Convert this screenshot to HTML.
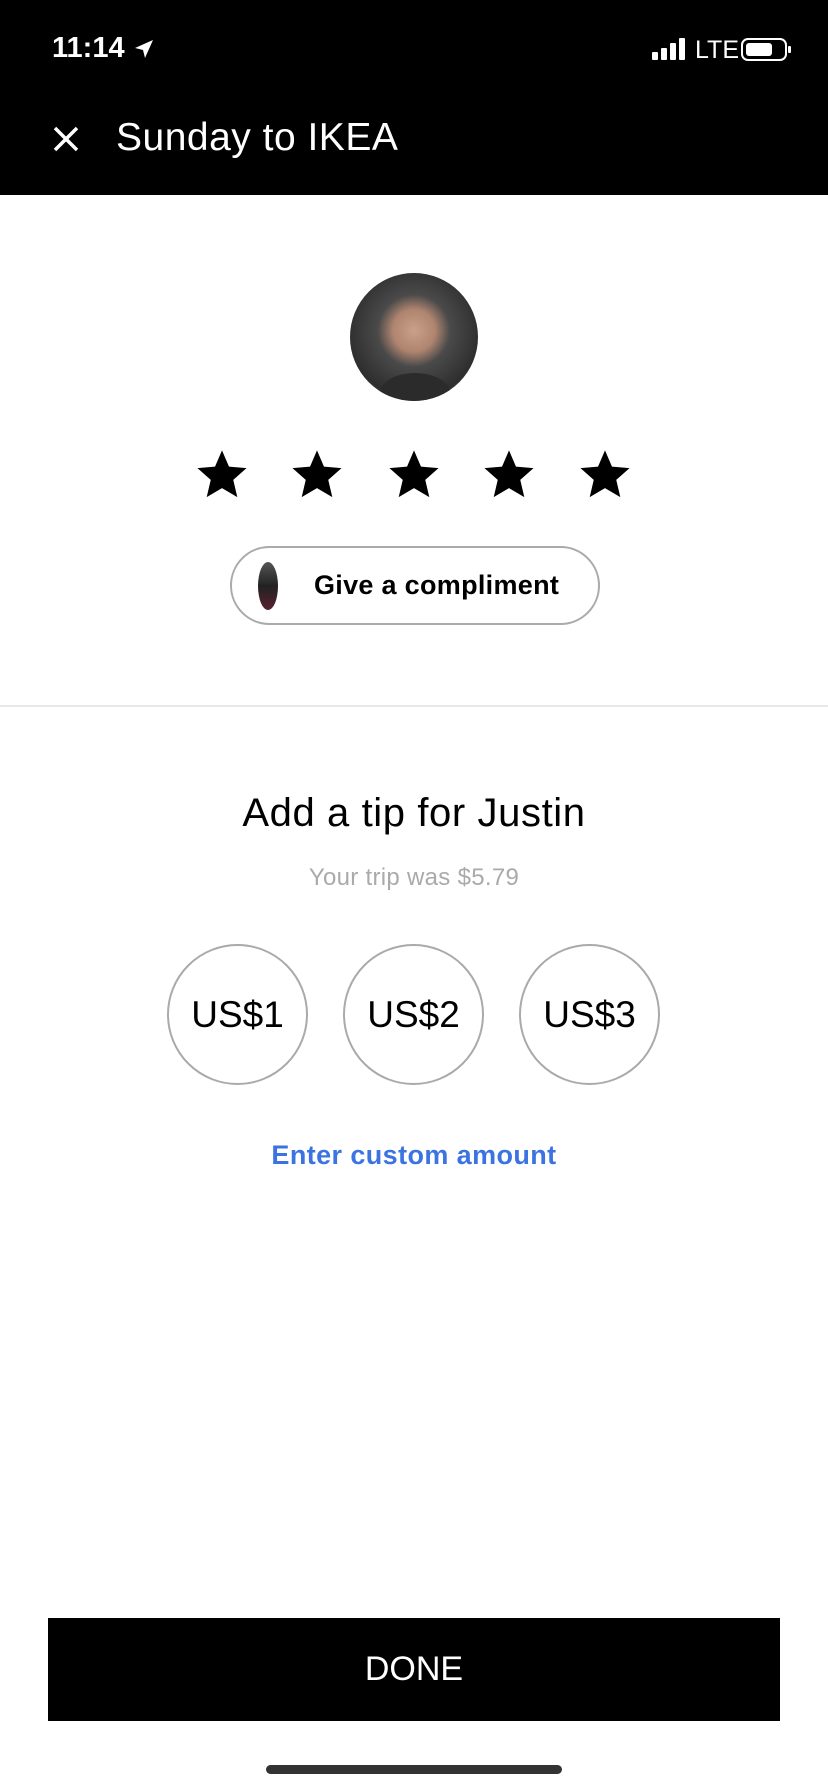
<!DOCTYPE html>
<html><head><meta charset="utf-8"><style>
*{margin:0;padding:0;box-sizing:border-box}
body{width:828px;height:1792px;background:#fff;position:relative;overflow:hidden;font-family:"Liberation Sans",sans-serif;color:#000}
.abs{position:absolute}
.hdr{left:0;top:0;width:828px;height:195px;background:#000;color:#fff}
.c{text-align:center;left:0;width:828px}
.star{position:absolute;top:447px;width:54px;height:54px}
.circ{position:absolute;top:944px;width:141px;height:141px;border:2px solid #aaa;border-radius:50%;display:flex;align-items:center;justify-content:center;font-size:37px}
</style></head><body>
<div class="abs hdr">
  <div class="abs" style="left:52px;top:32px;font-size:29px;font-weight:bold">11:14</div>
  <svg class="abs" style="left:133px;top:38px" width="22" height="22" viewBox="0 0 22 22"><path d="M20 2 L2 10 L10 12 L12 20 Z" fill="#fff"/></svg>
  <svg class="abs" style="left:652px;top:38px" width="36" height="24"><rect x="0" y="14" width="6" height="8" rx="1" fill="#fff"/><rect x="9" y="10" width="6" height="12" rx="1" fill="#fff"/><rect x="18" y="5" width="6" height="17" rx="1" fill="#fff"/><rect x="27" y="0" width="6" height="22" rx="1" fill="#fff"/></svg>
  <div class="abs" style="left:695px;top:36px;font-size:25px">LTE</div>
  <svg class="abs" style="left:741px;top:38px" width="52" height="24"><rect x="1" y="1" width="44" height="21" rx="6" fill="none" stroke="#fff" stroke-width="2"/><rect x="5" y="5" width="26" height="13" rx="3" fill="#fff"/><rect x="47" y="8" width="3" height="7" rx="1" fill="#fff"/></svg>
  <svg class="abs" style="left:52px;top:125px" width="28" height="28"><path d="M3 3L25 25M25 3L3 25" stroke="#fff" stroke-width="3.5"/></svg>
  <div class="abs" style="left:116px;top:116px;font-size:39px;letter-spacing:0.5px">Sunday to IKEA</div>
</div>
<div class="abs" style="left:350px;top:273px;width:128px;height:128px;border-radius:50%;overflow:hidden;background:radial-gradient(circle at 50% 45%,#c9a08a 0,#b08570 22%,#4a4a4a 38%,#2e2e2e 70%,#6b7a80 100%)">
  <div class="abs" style="left:30px;top:100px;width:70px;height:40px;border-radius:50%;background:#2b2b2b"></div>
</div>
<svg class="star" style="left:195px" viewBox="0 0 24 24"><path d="M12 1.5l3.1 7.2 7.8.7-5.9 5.2 1.8 7.7L12 18.3 5.2 22.3 7 14.6 1.1 9.4l7.8-.7z"/></svg>
<svg class="star" style="left:290px" viewBox="0 0 24 24"><path d="M12 1.5l3.1 7.2 7.8.7-5.9 5.2 1.8 7.7L12 18.3 5.2 22.3 7 14.6 1.1 9.4l7.8-.7z"/></svg>
<svg class="star" style="left:387px" viewBox="0 0 24 24"><path d="M12 1.5l3.1 7.2 7.8.7-5.9 5.2 1.8 7.7L12 18.3 5.2 22.3 7 14.6 1.1 9.4l7.8-.7z"/></svg>
<svg class="star" style="left:482px" viewBox="0 0 24 24"><path d="M12 1.5l3.1 7.2 7.8.7-5.9 5.2 1.8 7.7L12 18.3 5.2 22.3 7 14.6 1.1 9.4l7.8-.7z"/></svg>
<svg class="star" style="left:578px" viewBox="0 0 24 24"><path d="M12 1.5l3.1 7.2 7.8.7-5.9 5.2 1.8 7.7L12 18.3 5.2 22.3 7 14.6 1.1 9.4l7.8-.7z"/></svg>
<div class="abs" style="left:230px;top:546px;width:370px;height:79px;border:2px solid #aaa;border-radius:40px">
  <div class="abs" style="left:26px;top:14px;width:20px;height:48px;border-radius:50%;background:linear-gradient(#555,#222 50%,#5a2030)"></div>
  <div class="abs" style="left:82px;top:22px;font-size:27px;font-weight:bold;letter-spacing:0.3px">Give a compliment</div>
</div>
<div class="abs" style="left:0;top:705px;width:828px;height:2px;background:#e8e8e8"></div>
<div class="abs c" style="top:791px;font-size:40px;letter-spacing:0.6px">Add a tip for Justin</div>
<div class="abs c" style="top:864px;font-size:24px;color:#aaa;letter-spacing:0.3px">Your trip was $5.79</div>
<div class="circ" style="left:167px">US$1</div>
<div class="circ" style="left:343px">US$2</div>
<div class="circ" style="left:519px">US$3</div>
<div class="abs c" style="top:1140px;font-size:27px;color:#3b74e2;font-weight:bold;letter-spacing:0.4px">Enter custom amount</div>
<div class="abs" style="left:48px;top:1618px;width:732px;height:103px;background:#000;color:#fff;font-size:34px;display:flex;align-items:center;justify-content:center">DONE</div>
<div class="abs" style="left:266px;top:1765px;width:296px;height:9px;border-radius:5px;background:#333"></div>
</body></html>
